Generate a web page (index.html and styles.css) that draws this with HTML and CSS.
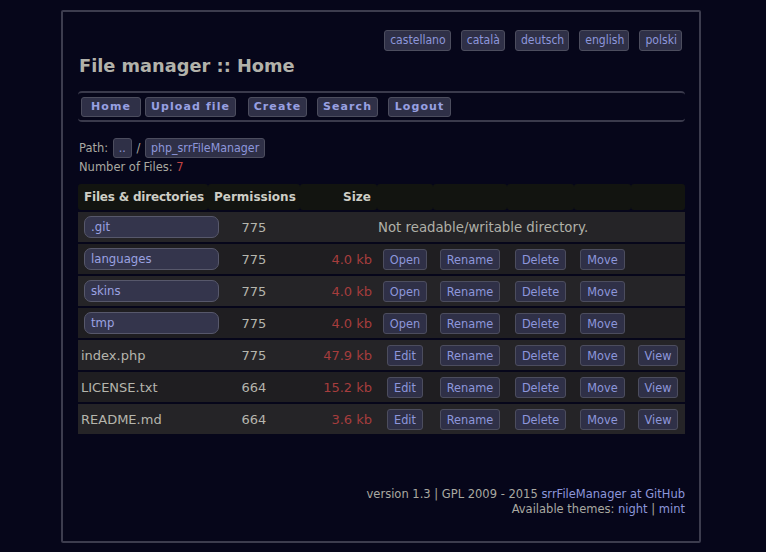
FILE: index.html
```html
<!DOCTYPE html>
<html>
<head>
<meta charset="utf-8">
<title>File manager :: Home</title>
<link rel="stylesheet" href="styles.css">
</head>
<body>
<div class="page">
  <div class="langs">
    <a class="btn lang">castellano</a>
    <a class="btn lang">català</a>
    <a class="btn lang">deutsch</a>
    <a class="btn lang">english</a>
    <a class="btn lang">polski</a>
  </div>
  <h1 class="title">File manager :: Home</h1>
  <div class="nav">
    <a class="navbtn nb-home">Home</a>
    <a class="navbtn nb-upload">Upload file</a>
    <a class="navbtn nb-create">Create</a>
    <a class="navbtn nb-search">Search</a>
    <a class="navbtn nb-logout">Logout</a>
  </div>
  <div class="path">Path: <a class="btn pbtn">..</a> / <a class="btn pbtn">php_srrFileManager</a></div>
  <div class="count">Number of Files: <span class="red">7</span></div>
  <table class="files">
    <colgroup>
      <col class="c-name"><col class="c-perm"><col class="c-size"><col class="c-a1"><col class="c-a2"><col class="c-a3"><col class="c-a4"><col class="c-a5">
    </colgroup>
    <thead>
      <tr><th class="left">Files &amp; directories</th><th>Permissions</th><th class="right">Size</th><th></th><th></th><th></th><th></th><th></th></tr>
    </thead>
    <tbody>
      <tr class="odd"><td><a class="dir">.git</a></td><td class="perm">775</td><td></td><td colspan="5" class="msg">Not readable/writable directory.</td></tr>
      <tr class="even"><td><a class="dir">languages</a></td><td class="perm">775</td><td class="size">4.0 kb</td><td class="act"><a class="btn abtn">Open</a></td><td class="act"><a class="btn abtn">Rename</a></td><td class="act"><a class="btn abtn">Delete</a></td><td class="act"><a class="btn abtn">Move</a></td><td></td></tr>
      <tr class="odd"><td><a class="dir">skins</a></td><td class="perm">775</td><td class="size">4.0 kb</td><td class="act"><a class="btn abtn">Open</a></td><td class="act"><a class="btn abtn">Rename</a></td><td class="act"><a class="btn abtn">Delete</a></td><td class="act"><a class="btn abtn">Move</a></td><td></td></tr>
      <tr class="even"><td><a class="dir">tmp</a></td><td class="perm">775</td><td class="size">4.0 kb</td><td class="act"><a class="btn abtn">Open</a></td><td class="act"><a class="btn abtn">Rename</a></td><td class="act"><a class="btn abtn">Delete</a></td><td class="act"><a class="btn abtn">Move</a></td><td></td></tr>
      <tr class="odd"><td class="fname">index.php</td><td class="perm">775</td><td class="size">47.9 kb</td><td class="act"><a class="btn abtn">Edit</a></td><td class="act"><a class="btn abtn">Rename</a></td><td class="act"><a class="btn abtn">Delete</a></td><td class="act"><a class="btn abtn">Move</a></td><td class="act"><a class="btn abtn">View</a></td></tr>
      <tr class="even"><td class="fname">LICENSE.txt</td><td class="perm">664</td><td class="size">15.2 kb</td><td class="act"><a class="btn abtn">Edit</a></td><td class="act"><a class="btn abtn">Rename</a></td><td class="act"><a class="btn abtn">Delete</a></td><td class="act"><a class="btn abtn">Move</a></td><td class="act"><a class="btn abtn">View</a></td></tr>
      <tr class="odd"><td class="fname">README.md</td><td class="perm">664</td><td class="size">3.6 kb</td><td class="act"><a class="btn abtn">Edit</a></td><td class="act"><a class="btn abtn">Rename</a></td><td class="act"><a class="btn abtn">Delete</a></td><td class="act"><a class="btn abtn">Move</a></td><td class="act"><a class="btn abtn">View</a></td></tr>
    </tbody>
  </table>
  <div class="footer">
    <div>version 1.3 | GPL 2009 - 2015 <a class="link">srrFileManager at GitHub</a></div>
    <div>Available themes: <a class="link">night</a> | <a class="link">mint</a></div>
  </div>
</div>
</body>
</html>
```
FILE: styles.css
```css
html, body {
  margin: 0;
  padding: 0;
  background: #06061a;
}
body {
  font-family: "DejaVu Sans", Verdana, sans-serif;
  color: #a9a9a1;
  font-size: 12px;
}
.page {
  box-sizing: border-box;
  width: 640px;
  height: 533px;
  margin: 10px 0 0 61px;
  border: 2px solid #3c3c4e;
  border-radius: 2px;
  padding: 18px 14px 0 15px;
  display: flex;
  flex-direction: column;
}
.btn {
  display: inline-block;
  box-sizing: border-box;
  background: #2f3047;
  border: 1px solid #4c4d5e;
  border-radius: 3px;
  color: #8d96db;
  text-decoration: none;
  font-family: "DejaVu Sans Condensed", "DejaVu Sans", sans-serif;
  font-stretch: condensed;
}
.langs {
  display: flex;
  justify-content: flex-end;
  gap: 10px;
  padding-right: 3px;
}
.lang {
  font-size: 12.1px;
  height: 21px;
  line-height: 19px;
  padding: 0 4px 0 5px;
}
.title {
  margin: 3px 0 0 1px;
  font-size: 17.8px;
  line-height: 24px;
  font-weight: bold;
  color: #b2b2aa;
}
.nav {
  margin-top: 13px;
  height: 27px;
  border-top: 2px solid #3a3a4c;
  border-bottom: 2px solid #3a3a4c;
  border-radius: 4px;
  display: flex;
  align-items: center;
  padding-left: 3px;
}
.navbtn {
  box-sizing: border-box;
  height: 20px;
  line-height: 18px;
  padding: 0;
  text-align: center;
  background: #2f3047;
  border: 1px solid #4c4d5e;
  border-radius: 3px;
  color: #98a0e2;
  font-weight: bold;
  font-size: 11px;
  letter-spacing: 1.1px;
  margin-left: 10px;
}
.nb-home { width: 60px; margin-left: 0; }
.nb-upload { width: 91px; margin-left: 4px; }
.nb-create { width: 59px; margin-left: 12px; }
.nb-search { width: 61px; }
.nb-logout { width: 63px; }
.path {
  margin-top: 16px;
  margin-left: 1px;
  font-size: 11.5px;
  line-height: 20px;
  height: 20px;
  color: #a9a9a1;
}
.pbtn {
  font-size: 12.3px;
  height: 20px;
  line-height: 18px;
  padding: 0 5px;
  margin: 0 1px;
  vertical-align: top;
}
.count {
  margin-left: 1px;
  font-size: 11.5px;
  line-height: 18px;
}
.red {
  color: #c24444;
}
.files {
  margin-top: 6px;
  width: 607px;
  table-layout: fixed;
  border-collapse: separate;
  border-spacing: 0 2px;
  font-size: 12px;
}
.c-name { width: 130px; }
.c-perm { width: 92px; }
.c-size { width: 77px; }
.c-a1 { width: 56px; }
.c-a2 { width: 74px; }
.c-a3 { width: 67px; }
.c-a4 { width: 57px; }
.c-a5 { width: 54px; }
.files th {
  background: #121410;
  color: #cdcdc5;
  font-weight: bold;
  height: 26px;
  padding: 0 6px;
  text-align: center;
  border-radius: 3px;
  white-space: nowrap;
}
.files th.left { text-align: left; letter-spacing: -0.2px; }
.files th.right { text-align: right; }
.files td {
  height: 30px;
  padding: 0;
  vertical-align: middle;
  white-space: nowrap;
}
tr.odd td { background: #252427; }
tr.even td { background: #1f1e21; }
.dir {
  position: relative;
  display: block;
  box-sizing: border-box;
  width: 135px;
  height: 22px;
  line-height: 20px;
  margin-left: 6px;
  padding-left: 6px;
  background: #34354c;
  border: 1px solid #57586b;
  border-radius: 7px;
  color: #9ba2e2;
  font-family: "DejaVu Sans Condensed", "DejaVu Sans", sans-serif;
  font-stretch: condensed;
  font-size: 13px;
  text-decoration: none;
}
.fname {
  padding-left: 3px !important;
  color: #b5b5ad;
  font-size: 13px;
}
.perm {
  text-align: center;
  color: #b5b5ad;
  font-size: 13px;
}
.size {
  text-align: right;
  padding-right: 5px !important;
  color: #a63d3d;
  font-size: 13px;
}
.msg {
  padding-left: 1px !important;
  color: #b0b0a8;
  font-size: 13.3px;
}
.act {
  text-align: center;
}
.abtn {
  font-size: 12.6px;
  height: 21px;
  line-height: 19px;
  padding: 0 6px;
}
.footer {
  margin-top: auto;
  margin-bottom: 24px;
  text-align: right;
  font-size: 11.5px;
  line-height: 15px;
  color: #a9a9a1;
}
.link {
  color: #8d96db;
  text-decoration: none;
}
```
